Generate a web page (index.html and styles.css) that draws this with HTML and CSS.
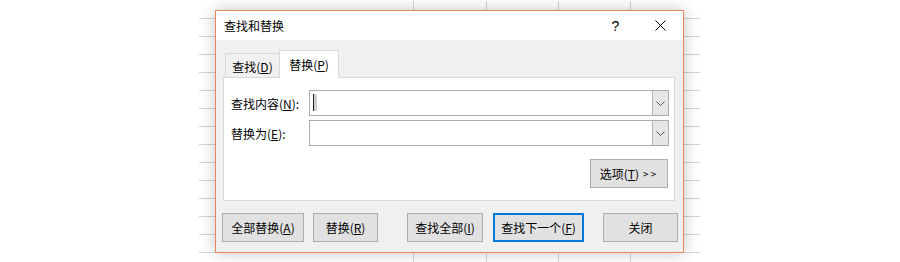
FILE: index.html
```html
<!DOCTYPE html>
<html lang="zh-CN">
<head>
<meta charset="utf-8">
<title>查找和替换</title>
<link rel="stylesheet" href="styles.css">
</head>
<body>
<div class="sheet">
  <div class="dialog">
    <div class="titlebar">
      <span class="title">查找和替换</span>
      <span class="tb-btn help">?</span>
      <span class="tb-btn close"><svg width="11" height="11" viewBox="0 0 11 11"><path d="M0.5 0.5L10.5 10.5M10.5 0.5L0.5 10.5" stroke="#000" stroke-width="1" fill="none"/></svg></span>
    </div>
    <div class="body">
      <div class="tabs">
        <div class="tab">查找(<u>D</u>)</div>
        <div class="tab active">替换(<u>P</u>)</div>
      </div>
      <div class="panel">
        <div class="fields">
          <label class="lbl">查找内容(<u>N</u>):</label>
          <div class="combo">
            <div class="combo-text"><span class="caret"></span></div>
            <div class="combo-btn"><svg width="9" height="5" viewBox="0 0 9 5"><path d="M0.5 0.5L4.5 4.5L8.5 0.5" stroke="#555" stroke-width="1" fill="none"/></svg></div>
          </div>
          <label class="lbl">替换为(<u>E</u>):</label>
          <div class="combo">
            <div class="combo-text"></div>
            <div class="combo-btn"><svg width="9" height="5" viewBox="0 0 9 5"><path d="M0.5 0.5L4.5 4.5L8.5 0.5" stroke="#555" stroke-width="1" fill="none"/></svg></div>
          </div>
        </div>
        <div class="opts-row">
          <button class="btn opts">选项(<u>T</u>) <span class="gt">&gt;&gt;</span></button>
        </div>
      </div>
      <div class="footer">
        <button class="btn b-all">全部替换(<u>A</u>)</button>
        <button class="btn b-rep">替换(<u>R</u>)</button>
        <button class="btn b-findall">查找全部(<u>I</u>)</button>
        <button class="btn b-next default">查找下一个(<u>F</u>)</button>
        <button class="btn b-close">关闭</button>
      </div>
    </div>
  </div>
</div>
</body>
</html>
```

FILE: styles.css
```css
body {
  margin: 0;
  background: #fff;
  font-family: "Noto Sans CJK SC", "Noto Sans", sans-serif;
  font-size: 12px;
  color: #000;
}

.sheet {
  margin-left: 199px;
  width: 501px;
  height: 262px;
  box-sizing: border-box;
  padding: 9px 16px 0 16px;
  border-top: 1px solid #fff;
  background-clip: padding-box;
  background-color: #fff;
  background-image:
    linear-gradient(#d4d4d4, #d4d4d4),
    linear-gradient(#d4d4d4, #d4d4d4),
    linear-gradient(#d4d4d4, #d4d4d4),
    linear-gradient(#d4d4d4, #d4d4d4),
    linear-gradient(to bottom, transparent 17px, #d4d4d4 17px);
  background-size: 1px 100%, 1px 100%, 1px 100%, 1px 100%, 100% 18px;
  background-position: 214px 0, 287px 0, 359px 0, 431px 0, 0 0;
  background-repeat: no-repeat, no-repeat, no-repeat, no-repeat, repeat;
}

.dialog {
  width: 469px;
  height: 243px;
  box-sizing: border-box;
  border: 1px solid #e5875d;
  background: #f0f0f0;
  box-shadow: 0 0 14px rgba(0, 0, 0, 0.24);
  display: flex;
  flex-direction: column;
}

.titlebar {
  height: 29px;
  background: #fff;
  display: flex;
  align-items: center;
  padding-left: 8px;
}

.title {
  flex: 1;
}

.tb-btn {
  width: 45px;
  height: 29px;
  display: flex;
  align-items: center;
  justify-content: center;
}

.help {
  font-family: "Liberation Sans", sans-serif;
  font-size: 14px;
}

.body {
  flex: 1;
  padding: 10px 8px 0 7px;
  display: flex;
  flex-direction: column;
}

.tabs {
  display: flex;
  align-items: flex-end;
  height: 28px;
  padding-left: 2px;
}

.tab {
  width: 54px;
  height: 25px;
  box-sizing: border-box;
  border: 1px solid #d9d9d9;
  border-bottom: none;
  border-right: none;
  background: #f0f0f0;
  display: flex;
  align-items: center;
  justify-content: center;
}

.tab.active {
  width: 60px;
  height: 28px;
  border-right: 1px solid #d9d9d9;
  background: #fff;
  position: relative;
  z-index: 1;
}

u {
  text-underline-offset: 1px;
}

.panel {
  margin-top: -1px;
  height: 124px;
  box-sizing: border-box;
  border: 1px solid #d9d9d9;
  background: #fff;
  position: relative;
  padding: 12px 5px 0 7px;
}

.fields {
  display: grid;
  grid-template-columns: 78px 1fr;
  row-gap: 4px;
  align-items: center;
}

.combo {
  height: 26px;
  box-sizing: border-box;
  border: 1px solid #ababab;
  display: flex;
}

.combo-text {
  flex: 1;
  padding-left: 3px;
  display: flex;
  align-items: center;
}

.caret {
  width: 3px;
  height: 17px;
  border-left: 1px solid #222;
  background: #cfcfcf;
  margin-bottom: 1px;
}

.combo-btn {
  width: 15px;
  border-left: 1px solid #b5b5b5;
  background: #e6e6e6;
  display: flex;
  align-items: center;
  justify-content: center;
}

.opts-row {
  display: flex;
  justify-content: flex-end;
  margin-top: 13px;
  padding-right: 1px;
}

.btn {
  flex-shrink: 0;
  height: 29px;
  box-sizing: border-box;
  border: 1px solid #adadad;
  background: #e1e1e1;
  font-family: "Noto Sans CJK SC", "Noto Sans", sans-serif;
  font-size: 12px;
  color: #000;
  padding: 0;
  margin: 0;
  display: flex;
  align-items: center;
  justify-content: center;
}

.btn.opts {
  width: 78px;
}

.gt {
  font-size: 10px;
  letter-spacing: 2px;
  margin-left: 4px;
}

.footer {
  display: flex;
  margin-top: 12px;
  margin-left: -1px;
}

.b-all { width: 82px; }
.b-rep { width: 65px; margin-left: 9px; }
.b-findall { width: 76px; margin-left: 29px; }
.b-next { width: 91px; margin-left: 10px; }
.b-close { width: 75px; margin-left: 19px; }

.btn.default {
  border: 2px solid #0078d7;
}
```
